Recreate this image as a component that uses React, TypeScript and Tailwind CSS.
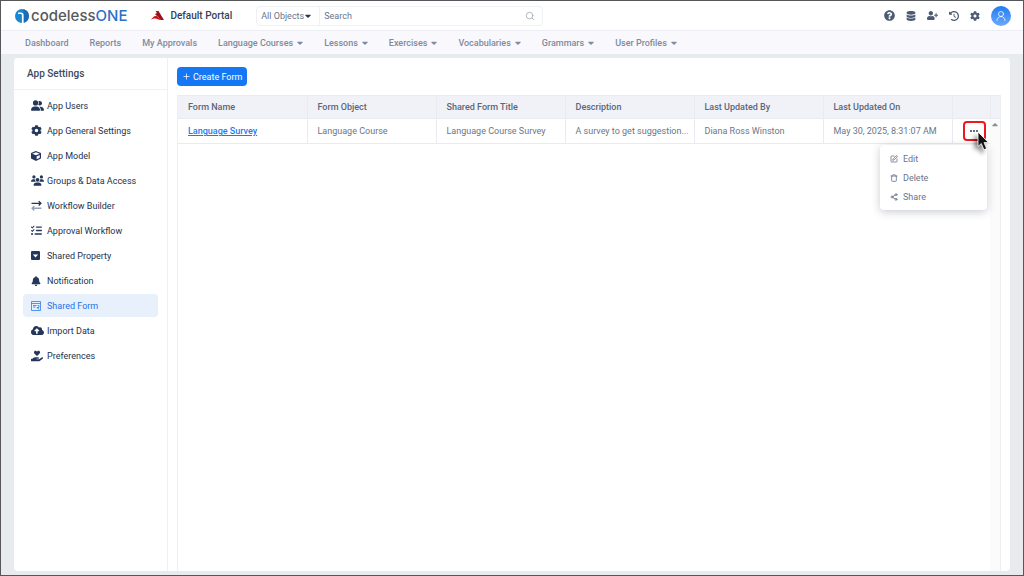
import { useState } from "react";
import type { ReactNode } from "react";
import {
  FaBell,
  FaCaretDown,
  FaCog,
  FaCloudUploadAlt,
  FaCube,
  FaDatabase,
  FaQuestionCircle,
  FaUserPlus,
} from "react-icons/fa";
import { BsCaretDownSquareFill } from "react-icons/bs";
import {
  FaClockRotateLeft,
  FaHandHoldingHeart,
  FaListCheck,
  FaUserGroup,
  FaUsers,
} from "react-icons/fa6";
import { Plus, Search, Share2, SquarePen, Trash, UserRound } from "lucide-react";

function Logo() {
  return (
    <a href="#home" aria-label="codelessONE" className="flex items-center gap-[2px]">
      <svg viewBox="0 0 28 28" className="size-[14px]" aria-hidden="true">
        <circle cx="14" cy="14" r="14" fill="#1c86cf" />
        <path d="M17 0.400a14 14 0 0 1 0 27.200Z" fill="#1a6cb4" />
        <path d="M6 8.500h5.500c2.500 0 4 1.500 4 4v15.500" fill="none" stroke="#fff" strokeWidth="3.400" />
      </svg>
      <span className="font-[Inter,sans-serif] text-[15px] leading-5 font-medium text-[#58595b]">
        codeless<span className="text-[#2f6fc6]">ONE</span>
      </span>
    </a>
  );
}

function PortalMark() {
  return (
    <svg viewBox="0 0 26 20" className="h-[10px] w-[13px]" aria-hidden="true">
      <path d="M9 0h6l11 18h-6c-3-1-4-4-7-7L8 6l4-2Z" fill="#9d1218" />
      <path d="M0 17c3-2 4-7 10-7 4 0 5 5 10 8-5 0-8-3-12-3-3 0-5 1-8 2Z" fill="#c8161d" />
    </svg>
  );
}

function FlowArrows() {
  return (
    <svg viewBox="0 0 20 20" className="size-[11px]" fill="none" strokeWidth="2.400" aria-hidden="true">
      <path d="M1 6h17M14 2l4 4-4 4" stroke="#24365a" />
      <path d="M19 15H2M6 11l-4 4 4 4" stroke="#98a1b3" />
    </svg>
  );
}

function FormIcon() {
  return (
    <svg viewBox="0 0 20 20" className="size-[10px]" fill="none" stroke="#2a7df0" strokeWidth="1.600" aria-hidden="true">
      <path d="M1 1h18v18H1zM1 5h18M4 9h7M4 12h5M13 9h3v4h-4" />
      <path d="m12 13 4 4" strokeWidth="2" />
    </svg>
  );
}

function Pointer() {
  return (
    <svg
      viewBox="0 0 12 20"
      className="pointer-events-none absolute top-3 left-6 z-20 h-5 w-3 drop-shadow-[-3px_3px_2px_rgba(0,0,0,0.5)]"
      aria-hidden="true"
    >
      <path d="M1 1v14.500l3.300-3 2.600 6.200 2.700-1.100L7 11.600h4.500Z" fill="#111" stroke="#fff" strokeWidth="0.800" />
    </svg>
  );
}

const navItems: { label: string; menu?: boolean }[] = [
  { label: "Dashboard" },
  { label: "Reports" },
  { label: "My Approvals" },
  { label: "Language Courses", menu: true },
  { label: "Lessons", menu: true },
  { label: "Exercises", menu: true },
  { label: "Vocabularies", menu: true },
  { label: "Grammars", menu: true },
  { label: "User Profiles", menu: true },
];

const tools: { label: string; icon: ReactNode }[] = [
  { label: "Help", icon: <FaQuestionCircle /> },
  { label: "Data", icon: <FaDatabase className="size-[10px]" /> },
  { label: "Invite user", icon: <FaUserPlus /> },
  { label: "History", icon: <FaClockRotateLeft className="size-[10px]" /> },
  { label: "Settings", icon: <FaCog className="size-[10px]" /> },
];

const settings: { label: string; icon: ReactNode }[] = [
  { label: "App Users", icon: <FaUserGroup className="size-[13px]" /> },
  { label: "App General Settings", icon: <FaCog /> },
  { label: "App Model", icon: <FaCube className="size-[10px]" /> },
  { label: "Groups & Data Access", icon: <FaUsers className="size-[13px]" /> },
  { label: "Workflow Builder", icon: <FlowArrows /> },
  { label: "Approval Workflow", icon: <FaListCheck /> },
  { label: "Shared Property", icon: <BsCaretDownSquareFill className="size-[9px]" /> },
  { label: "Notification", icon: <FaBell className="size-[10px]" /> },
  { label: "Shared Form", icon: <FormIcon /> },
  { label: "Import Data", icon: <FaCloudUploadAlt className="size-[13px]" /> },
  { label: "Preferences", icon: <FaHandHoldingHeart className="size-3" /> },
];

const columns = [
  "Form Name",
  "Form Object",
  "Shared Form Title",
  "Description",
  "Last Updated By",
  "Last Updated On",
];

const row = [
  "Language Course",
  "Language Course Survey",
  "A survey to get suggestion...",
  "Diana Ross Winston",
  "May 30, 2025, 8:31:07 AM",
];

const actions = [
  { label: "Edit", icon: SquarePen },
  { label: "Delete", icon: Trash },
  { label: "Share", icon: Share2 },
];

function TopBar() {
  return (
    <header className="flex h-[30px] items-center border-b border-[#eceef3] bg-white pr-3 pl-[14px]">
      <Logo />
      <div className="ml-6 flex items-center gap-[6px] text-[10px] font-medium text-[#33415a]">
        <PortalMark />
        Default Portal
      </div>
      <form className="ml-6 flex h-5 w-[287px] items-center rounded-sm border border-[#eff1f5] text-[#69758a]">
        <div className="relative flex h-full w-[63px] items-center border-r border-[#eff1f5]">
          <select aria-label="Object" className="w-full appearance-none bg-transparent pl-1 outline-none">
            <option>All Objects</option>
          </select>
          <FaCaretDown className="pointer-events-none absolute right-2 h-[10px] w-[6px] text-[#24365a]" />
        </div>
        <input
          aria-label="Search"
          placeholder="Search"
          className="min-w-0 flex-1 bg-transparent pl-1 outline-none placeholder:text-[#69758a]"
        />
        <button type="button" aria-label="Run search" className="pr-[7px] text-[#a4acba]">
          <Search className="size-[10px]" />
        </button>
      </form>
      <div className="ml-auto flex items-center gap-[11px] text-[11px] text-[#4d5a73]">
        {tools.map((tool) => (
          <button key={tool.label} type="button" aria-label={tool.label}>
            {tool.icon}
          </button>
        ))}
        <button
          type="button"
          aria-label="Account"
          className="flex size-5 items-center justify-center rounded-full bg-linear-to-b from-[#1d7cf2] to-[#69a9fb] text-white"
        >
          <UserRound className="size-3" strokeWidth={1.5} />
        </button>
      </div>
    </header>
  );
}

function NavBar() {
  return (
    <nav className="flex h-[23px] items-center gap-[21px] bg-[#f9f9fd] pl-6 font-medium text-[#7f8a9e]">
      {navItems.map((item) =>
        item.menu ? (
          <button key={item.label} type="button" className="flex items-center gap-1">
            {item.label}
            <FaCaretDown className="h-[10px] w-[6px]" />
          </button>
        ) : (
          <a key={item.label} href="#nav">
            {item.label}
          </a>
        ),
      )}
    </nav>
  );
}

function Sidebar() {
  return (
    <aside className="w-[154px] shrink-0 border-r border-[#eff0f3]">
      <h1 className="flex h-8 items-center border-b border-[#eff0f3] pl-[13px] text-[10px] font-medium text-[#3c4961]">
        App Settings
      </h1>
      <ul className="flex flex-col gap-[2px] px-[9px] pt-1">
        {settings.map((item) => {
          const active = item.label === "Shared Form";
          return (
            <li key={item.label}>
              <a
                href="#settings"
                aria-current={active ? "page" : undefined}
                className={`flex h-[23px] items-center gap-[3px] rounded pl-2 ${
                  active ? "bg-[#e8f1fb] text-[#1a73ee]" : "text-[#24324a]"
                }`}
              >
                <span className={`flex w-[13px] shrink-0 text-[11px] ${active ? "" : "text-[#24365a]"}`}>
                  {item.icon}
                </span>
                {item.label}
              </a>
            </li>
          );
        })}
      </ul>
    </aside>
  );
}

function RowMenu() {
  const [open, setOpen] = useState(true);
  return (
    <div className="relative ml-[10px] flex h-full items-center">
      <button
        type="button"
        aria-label="Row actions"
        aria-expanded={open}
        onClick={() => setOpen(!open)}
        className="flex h-5 w-[23px] items-center justify-center gap-px rounded-sm border-2 border-[#f01820]"
      >
        <span className="size-[2px] rounded-full bg-[#33415a]" />
        <span className="size-[2px] rounded-full bg-[#33415a]" />
        <span className="size-[2px] rounded-full bg-[#33415a]" />
      </button>
      {open && (
        <ul className="absolute top-6 right-[3px] z-10 flex w-[107px] flex-col rounded-sm bg-white py-1 text-[#6a768b] shadow-[0_2px_8px_rgba(40,50,70,0.25)]">
          {actions.map(({ label, icon: Icon }) => (
            <li key={label}>
              <button type="button" className="flex h-[19px] w-full items-center gap-[5px] pl-[10px]">
                <Icon className="size-2" strokeWidth={2.5} />
                {label}
              </button>
            </li>
          ))}
        </ul>
      )}
    </div>
  );
}

function FormsTable() {
  return (
    <div className="flex flex-1 border-x border-[#eeeff2]">
      <div className="min-w-0 flex-1">
        <table className="w-full table-fixed border-collapse text-left">
          <thead>
            <tr className="h-[23px] bg-[#f1f2f7] text-[#5a667b]">
              {columns.map((column) => (
                <th key={column} className="border border-l-0 border-[#e9ebf0] pr-1 pl-[10px] font-medium">
                  {column}
                </th>
              ))}
              <th aria-label="Actions" className="w-[38px] border-y border-[#e9ebf0]" />
            </tr>
          </thead>
          <tbody>
            <tr className="h-[25px] text-[#6a768b]">
              <td className="border-r border-b border-[#e9ebf0] pr-1 pl-[10px]">
                <a href="#form" className="font-medium text-[#1a7af0] underline">
                  Language Survey
                </a>
              </td>
              {row.map((value) => (
                <td key={value} className="border-r border-b border-[#e9ebf0] pr-1 pl-[10px] whitespace-nowrap">
                  {value}
                </td>
              ))}
              <td className="relative border-b border-[#e9ebf0] p-0">
                <RowMenu />
                <Pointer />
              </td>
            </tr>
          </tbody>
        </table>
      </div>
      <div className="flex w-[10px] flex-col items-center bg-[#fbfbfc]">
        <div className="h-6 w-full border border-r-0 border-[#e9ebf0] bg-[#f1f2f7]" />
        <FaCaretDown className="mt-px h-[10px] w-[6px] rotate-180 text-[#8a8d92]" />
      </div>
    </div>
  );
}

export default function App() {
  return (
    <div className="flex min-h-screen flex-col border border-[#55575a] bg-[#e8ebee] font-[Roboto,sans-serif] text-[9px] leading-3">
      <TopBar />
      <NavBar />
      <div className="flex flex-1 pt-1 pr-[13px] pb-1 pl-[13px]">
        <div className="flex flex-1 rounded-sm bg-white">
          <Sidebar />
          <main className="flex min-w-0 flex-1 flex-col pt-[9px] pr-[9px] pl-[9px]">
            <button
              type="button"
              className="mb-[9px] flex h-[19px] items-center gap-[2px] self-start rounded-sm bg-[#1677f5] px-[5px] text-white"
            >
              <Plus className="size-[9px]" />
              Create Form
            </button>
            <FormsTable />
          </main>
        </div>
      </div>
    </div>
  );
}
